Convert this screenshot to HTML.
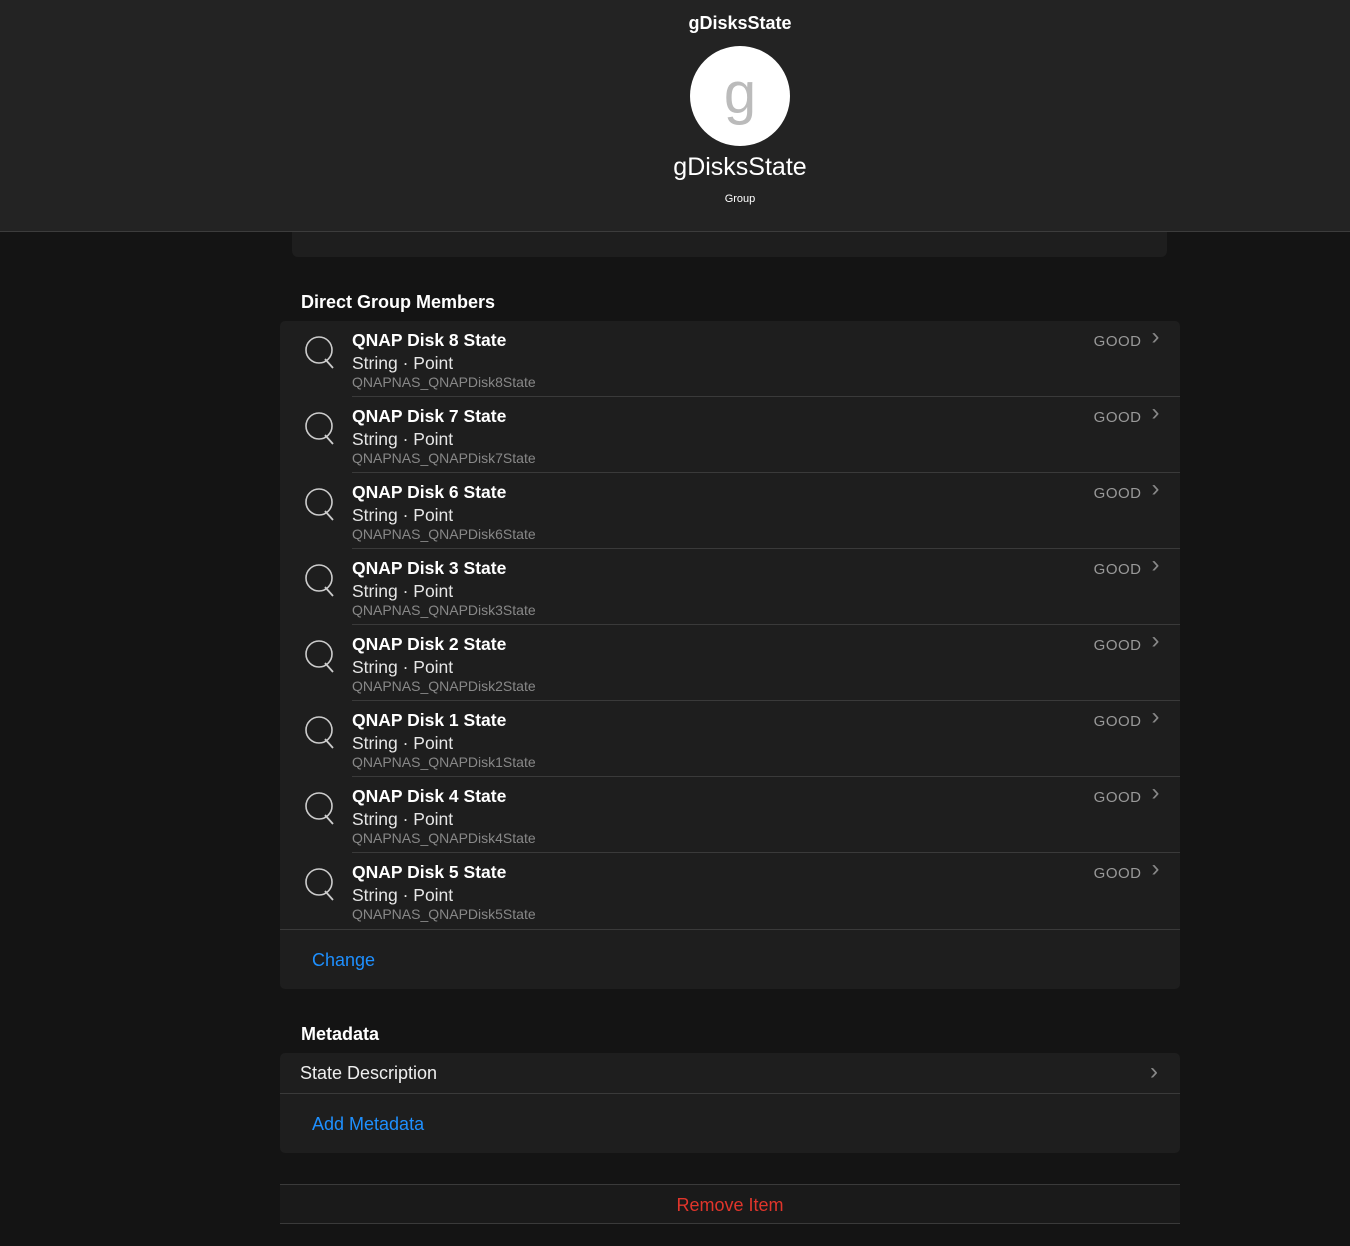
<!DOCTYPE html>
<html><head><style>
body{margin:0;width:1350px;height:1246px;background:#141414;font-family:"Liberation Sans","DejaVu Sans",sans-serif;color:#fff;position:relative;overflow:hidden}
.hdr{position:absolute;left:0;top:0;width:1350px;height:231px;background:#232323;border-bottom:1px solid #3c3c3c}
.c{position:absolute;left:540px;width:400px;text-align:center}
.t1{top:13px;font-size:18px;font-weight:bold}
.av{position:absolute;left:690px;top:46px;width:100px;height:100px;border-radius:50%;background:#fff;color:#bbb;font-size:58px;text-align:center;line-height:96px}
.t2{top:153px;font-size:25px}
.t3{top:193px;font-size:11px}
.pc{position:absolute;left:292px;top:232px;width:875px;height:25px;background:#1e1e1e;border-radius:0 0 6px 6px}
.sec{position:absolute;left:301px;font-size:18px;font-weight:bold}
.card{position:absolute;left:280px;width:900px;background:#1e1e1e;border-radius:5px}
.row{position:relative;height:75px;border-bottom:1px solid #3a3a3a;margin-left:72px}
.q{position:absolute;left:-48px;top:14px}
.n{position:absolute;top:9px;font-size:17.5px;font-weight:bold}
.s{position:absolute;top:32px;font-size:17.5px;color:#e6e6e6}
.i{position:absolute;top:53px;font-size:14px;color:#888}
.g{position:absolute;right:20px;top:4px;font-size:15px;color:#999;letter-spacing:.5px}
.g:after{content:"›";font-size:24px;color:#888;margin-left:10px;position:relative;top:-2px}
.link{color:#1e90ff;font-size:18px}
</style></head><body>
<div class="hdr"><div class="c t1">gDisksState</div><div class="av">g</div><div class="c t2">gDisksState</div><div class="c t3">Group</div></div>
<div class="pc"></div>
<div class="sec" style="top:292px">Direct Group Members</div>
<svg width="0" height="0" style="position:absolute"><defs><g id="q"><circle cx="15" cy="15" r="13" fill="none" stroke="#ccc" stroke-width="1.6"/><path d="M21 24 L29 33" stroke="#ccc" stroke-width="1.8"/></g></defs></svg>
<div class="card" style="top:321px;height:668px">
<div class="row"><svg class="q" width="32" height="34"><use href="#q"/></svg><div class="n">QNAP Disk 8 State</div><div class="s">String · Point</div><div class="i">QNAPNAS_QNAPDisk8State</div><div class="g">GOOD</div></div>
<div class="row"><svg class="q" width="32" height="34"><use href="#q"/></svg><div class="n">QNAP Disk 7 State</div><div class="s">String · Point</div><div class="i">QNAPNAS_QNAPDisk7State</div><div class="g">GOOD</div></div>
<div class="row"><svg class="q" width="32" height="34"><use href="#q"/></svg><div class="n">QNAP Disk 6 State</div><div class="s">String · Point</div><div class="i">QNAPNAS_QNAPDisk6State</div><div class="g">GOOD</div></div>
<div class="row"><svg class="q" width="32" height="34"><use href="#q"/></svg><div class="n">QNAP Disk 3 State</div><div class="s">String · Point</div><div class="i">QNAPNAS_QNAPDisk3State</div><div class="g">GOOD</div></div>
<div class="row"><svg class="q" width="32" height="34"><use href="#q"/></svg><div class="n">QNAP Disk 2 State</div><div class="s">String · Point</div><div class="i">QNAPNAS_QNAPDisk2State</div><div class="g">GOOD</div></div>
<div class="row"><svg class="q" width="32" height="34"><use href="#q"/></svg><div class="n">QNAP Disk 1 State</div><div class="s">String · Point</div><div class="i">QNAPNAS_QNAPDisk1State</div><div class="g">GOOD</div></div>
<div class="row"><svg class="q" width="32" height="34"><use href="#q"/></svg><div class="n">QNAP Disk 4 State</div><div class="s">String · Point</div><div class="i">QNAPNAS_QNAPDisk4State</div><div class="g">GOOD</div></div>
<div class="row" style="margin-left:0;padding-left:72px;height:76px"><svg class="q" style="left:24px" width="32" height="34"><use href="#q"/></svg><div class="n">QNAP Disk 5 State</div><div class="s">String · Point</div><div class="i">QNAPNAS_QNAPDisk5State</div><div class="g">GOOD</div></div>
<div class="link" style="position:absolute;left:32px;top:629px">Change</div>
</div>
<div class="sec" style="top:1024px">Metadata</div>
<div class="card" style="top:1053px;height:100px">
<div style="height:40px;border-bottom:1px solid #3a3a3a;position:relative"><span style="position:absolute;left:20px;top:10px;font-size:18px;color:#eee">State Description</span><span style="position:absolute;right:22px;top:5px;font-size:24px;color:#888">›</span></div>
<div class="link" style="position:absolute;left:32px;top:61px">Add Metadata</div>
</div>
<div style="position:absolute;left:280px;top:1184px;width:900px;height:38px;background:#1a1a1a;border-top:1px solid #3a3a3a;border-bottom:1px solid #3a3a3a;text-align:center;line-height:40px;color:#e0352b;font-size:18px">Remove Item</div>
</body></html>
